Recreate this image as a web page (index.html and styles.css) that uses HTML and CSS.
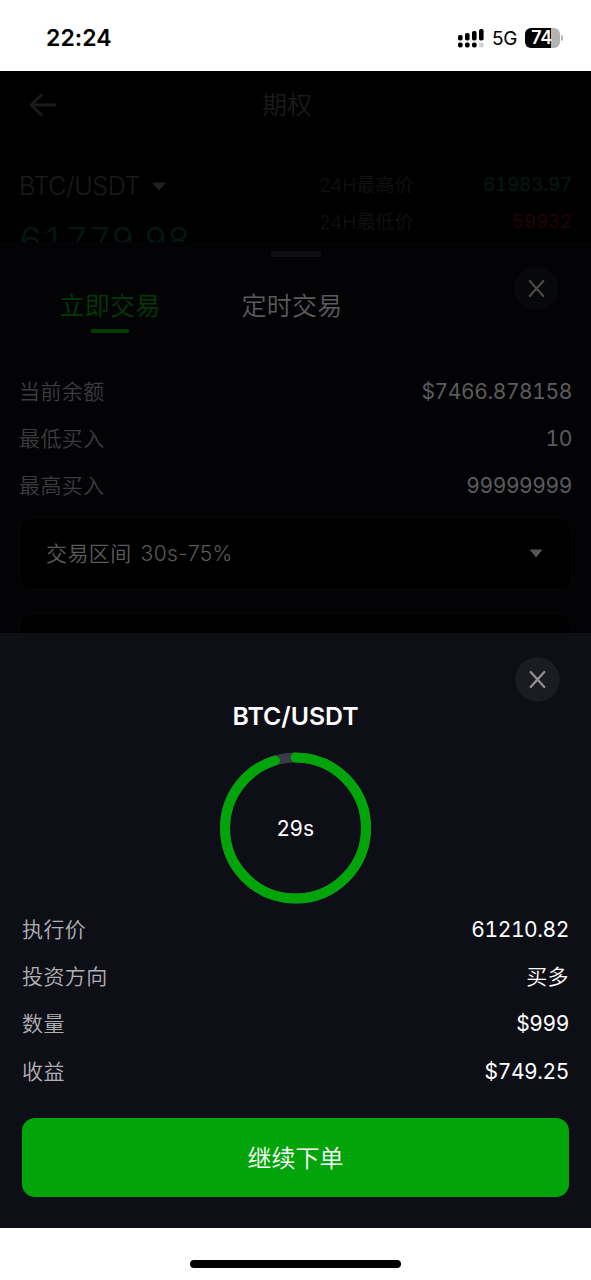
FILE: index.html
```html
<!DOCTYPE html>
<html lang="zh-CN">
<head>
<meta charset="utf-8">
<title>期权</title>
<link rel="stylesheet" href="styles.css">
</head>
<body>
<div class="phone">
  <header class="status">
    <span class="clock">22:24</span>
    <div class="status-right">
      <svg class="signal" width="28" height="20" viewBox="0 0 28 20">
        <g fill="#000"><rect x="1" y="7" width="4.6" height="5.6" rx="1.8"/><rect x="8" y="5" width="4.6" height="7.6" rx="1.8"/><rect x="15" y="3" width="4.6" height="9.6" rx="1.8"/><rect x="22" y="1" width="4.6" height="11.6" rx="1.8"/><rect x="1" y="14.5" width="4.6" height="5" rx="1.8"/><rect x="8" y="14.5" width="4.6" height="5" rx="1.8"/><rect x="15" y="14.5" width="4.6" height="5" rx="1.8"/></g>
        <rect x="22" y="14.5" width="4.6" height="5" rx="1.8" fill="#d2d2d2"/>
      </svg>
      <span class="network">5G</span>
      <div class="battery"><span>74</span></div>
      <i class="battery-tip"></i>
    </div>
  </header>

  <section class="page">
    <nav class="navbar">
      <svg width="28" height="24" viewBox="0 0 28 24" fill="none" stroke="#1b1b1b" stroke-width="2.8" stroke-linecap="round" stroke-linejoin="round"><path d="M26 12H2M12.500 2L2 12l10.500 10"/></svg>
      <span class="nav-title">期权</span>
    </nav>
    <div class="market">
      <div class="pair">
        <div class="pair-name"><span>BTC/USDT</span><svg width="16" height="9" viewBox="0 0 16 9"><path d="M1 .5h14L8 8.500z" fill="#202020"/></svg></div>
        <div class="price">61779.98</div>
      </div>
      <div class="stats">
        <div class="stat"><span>24H最高价</span><span class="up">61983.97</span></div>
        <div class="stat"><span>24H最低价</span><span class="down">59932</span></div>
      </div>
    </div>
  </section>

  <section class="sheet">
    <i class="handle"></i>
    <div class="tabs">
      <div class="tab active">立即交易</div>
      <div class="tab">定时交易</div>
      <svg class="close" width="45" height="45" viewBox="0 0 45 45"><circle cx="22.500" cy="22.500" r="22" fill="#07080a"/><path d="M15.700 15l13.600 15M29.300 15L15.700 30" stroke="#494949" stroke-width="2.200" stroke-linecap="round"/></svg>
    </div>
    <div class="rows">
      <div class="row"><span>当前余额</span><b>$7466.878158</b></div>
      <div class="row"><span>最低买入</span><b>10</b></div>
      <div class="row"><span>最高买入</span><b>99999999</b></div>
    </div>
    <div class="select"><div class="range"><span>交易区间</span><em>30s-75%</em></div><svg width="14" height="9" viewBox="0 0 14 9"><path d="M.5.500h13L7 8.500z" fill="#555"/></svg></div>
    <div class="select"></div>
  </section>

  <section class="order">
    <div class="order-top"><svg width="45" height="45" viewBox="0 0 45 45"><circle cx="22.500" cy="22.500" r="22.300" fill="#1b1b22"/><path d="M15.700 15l13.600 15M29.300 15L15.700 30" stroke="#929294" stroke-width="2.200" stroke-linecap="round"/></svg></div>
    <h1 class="order-title">BTC/USDT</h1>
    <div class="timer">
      <svg width="151" height="152" viewBox="0.5 0 151 152" fill="none" stroke-width="10">
        <circle cx="76" cy="76" r="70.500" stroke="#3b3945"/>
        <circle cx="76" cy="76" r="70.500" stroke="#02a509" stroke-linecap="round" pathLength="360" stroke-dasharray="343 360" transform="rotate(-90 76 76)"/>
      </svg>
      <span class="seconds">29s</span>
    </div>
    <div class="details">
      <div class="row"><span>执行价</span><b>61210.82</b></div>
      <div class="row"><span>投资方向</span><b class="cjk">买多</b></div>
      <div class="row"><span>数量</span><b>$999</b></div>
      <div class="row"><span>收益</span><b>$749.25</b></div>
    </div>
    <button class="continue">继续下单</button>
  </section>

  <footer class="home"><i></i></footer>
</div>
</body>
</html>
```
FILE: styles.css
```css
* { box-sizing: border-box; }
body { margin: 0; background: #fff; }
.phone {
  width: 591px; height: 1280px; overflow: hidden;
  display: flex; flex-direction: column;
  font-family: Inter, "Noto Sans CJK SC", sans-serif;
  font-weight: 350; white-space: nowrap;
}

.status {
  height: 71px; flex: none; padding: 2px 31px 0 46px;
  display: flex; align-items: center; justify-content: space-between;
  background: #fff; color: #000;
}
.clock { font-size: 23px; font-weight: 600; line-height: 30px; margin-top: 2px; letter-spacing: .1px; }
.status-right { display: flex; align-items: center; margin-top: 2px; }
.signal { margin-right: 7px; }
.network { font-size: 19px; font-weight: 400; line-height: 24px; width: 33px; margin-top: 2px; letter-spacing: -.2px; }
.battery {
  width: 35px; height: 20px; border-radius: 6px;
  display: flex; align-items: center; justify-content: center;
  background: linear-gradient(90deg, #000 74%, #b3b3b3 74%);
  color: #fff; font-size: 18px; font-weight: 600; letter-spacing: -.5px;
}
.battery span { margin-right: 2px; }
.battery-tip { width: 2px; height: 6px; margin: 0 -3px 0 1px; border-radius: 0 2px 2px 0; background: #b3b3b3; }

.page { height: 171px; flex: none; overflow: hidden; background: #000; color: #1b1b1b; }
.navbar { height: 68px; padding: 0 39px 0 29px; display: grid; grid-template-columns: 100px 1fr 107px; align-items: center; }
.nav-title { text-align: center; font-size: 25px; line-height: 36px; margin-top: -1px; }
.market { display: flex; justify-content: space-between; padding: 28px 19px 0; }
.pair-name { display: flex; align-items: center; gap: 11px; height: 38px; font-size: 25px; letter-spacing: -.4px; }
.price { margin-top: 10px; height: 50px; line-height: 50px; font-size: 36px; font-feature-settings: "tnum"; letter-spacing: -.2px; color: #001b14; }
.stats { width: 253px; margin-top: -1px; }
.stat { height: 37px; display: flex; align-items: center; justify-content: space-between; font-size: 19px; color: #111; }
.stat span:first-child { padding-bottom: 3px; }
.stat span:last-child { font-feature-settings: "tnum"; letter-spacing: -.3px; font-weight: 400; }
.stat .up { color: #001b12; }
.stat .down { color: #230406; }

.sheet {
  height: 391px; flex: none; overflow: hidden; padding: 9px 19px 0;
  background: #030306; color: #5b5b5c;
}
.handle { display: block; width: 50px; height: 6px; margin: 0 auto; background: #0e0e15; }
.tabs { height: 110px; display: flex; align-items: flex-start; padding-top: 29px; }
.tab {
  width: 182px; height: 49px; line-height: 40px; text-align: center;
  font-size: 25px; letter-spacing: .3px;
  display: flex; flex-direction: column; align-items: center;
}
.tab.active { color: #003b03; }
.tab.active::after { content: ""; width: 38px; height: 4px; margin-top: 3px; border-radius: 1px; background: #003b03; }
.close { margin: -20px 0 0 131px; flex: none; }
.row { display: flex; align-items: center; justify-content: space-between; height: 47.3px; font-size: 21px; letter-spacing: .4px; }
.row span { padding-bottom: 2px; }
.row b { font-weight: 400; font-feature-settings: "tnum"; letter-spacing: -.4px; padding-top: 1px; }
.row .cjk { font-weight: 350; padding: 0 0 2px; letter-spacing: .4px; }
.sheet .row span { color: #3c3c3d; }
.select {
  height: 73px; margin-bottom: 23px; padding: 0 28px 0 26px;
  display: flex; align-items: center; justify-content: space-between;
  border: 1px solid #09090b; border-radius: 13px; background: #000;
  font-size: 21px; letter-spacing: .4px;
}
.rows { margin-bottom: 8px; }
.range { display: flex; align-items: center; gap: 9px; padding-bottom: 2px; }
.select em { font-style: normal; padding-top: 3px; }

.order { height: 595px; flex: none; padding: 24px 22px 0; background: #0e0e17; color: #fff; }
.order-top { height: 45px; display: flex; justify-content: flex-end; padding-right: 9px; }
.order-title { margin: -1px 0 0; height: 30px; line-height: 30px; text-align: center; font-size: 24.8px; font-weight: 600; }
.timer { width: 151px; height: 152px; margin: 21px auto 0; display: grid; place-items: center; }
.timer > * { grid-area: 1 / 1; }
.timer svg { display: block; }
.seconds { font-size: 21px; font-weight: 400; letter-spacing: .2px; }
.details { margin-top: 1px; }
.details .row span { color: #b1b1b4; }
.continue {
  display: block; width: 547px; height: 79px; margin-top: 24px; padding: 0 0 3px;
  border: 0; border-radius: 13px; background: #02a509; color: #fff;
  font: inherit; font-size: 24px;
}
.home { flex: 1; display: flex; justify-content: center; padding-top: 32px; background: #fff; }
.home i { width: 211px; height: 8px; border-radius: 4px; background: #000; }
```
